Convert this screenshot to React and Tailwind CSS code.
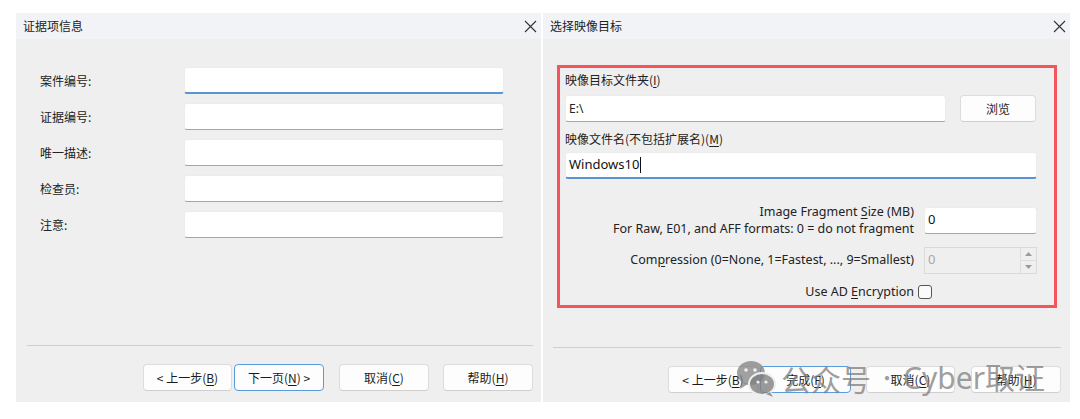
import React from 'react';

const cjk = "font-['Microsoft_YaHei','Noto_Sans_CJK_SC',sans-serif]";
const latin = "font-['Segoe_UI','Noto_Sans','Noto_Sans_CJK_SC',sans-serif]";

function CloseIcon() {
  return (
    <svg width="13" height="13" viewBox="0 0 13 13" className="text-[#333]">
      <path d="M1 1L12 12M12 1L1 12" stroke="currentColor" strokeWidth="1.1" />
    </svg>
  );
}

function TitleBar({ title }) {
  return (
    <div className={`flex h-[26px] items-center justify-between bg-[#f2f3f7] pl-[7px] pr-[4px] text-[12px] text-[#222] ${cjk}`}>
      <span>{title}</span>
      <CloseIcon />
    </div>
  );
}

function TextBox({ active, className = '', children }) {
  return (
    <div
      className={`flex h-[27px] items-center rounded-[3px] border border-[#ececec] bg-white px-[3px] ${
        active ? 'border-b-2 border-b-[#5694d6]' : 'border-b-[#a6a6a6]'
      } ${className}`}
    >
      {children}
    </div>
  );
}

function Button({ focused, children, className = '' }) {
  return (
    <button
      className={`flex h-[27px] items-center justify-center rounded-[4px] border bg-[#fdfdfd] text-[12px] text-[#1b1b1b] ${cjk} ${
        focused ? 'border-[#5a9be0]' : 'border-[#dcdcdc] border-b-[#cfcfcf]'
      } ${className}`}
    >
      {children}
    </button>
  );
}

const U = ({ children }) => <span className="underline underline-offset-2">{children}</span>;

const fields = ['案件编号:', '证据编号:', '唯一描述:', '检查员:', '注意:'];

function EvidenceDialog() {
  return (
    <div className="flex h-[389px] w-[525px] flex-col bg-[#efefef]">
      <TitleBar title="证据项信息" />
      <div className="flex flex-col gap-[9px] pl-[24px] pt-[28px]">
        {fields.map((label, i) => (
          <div key={label} className="flex items-center">
            <span className={`w-[144px] text-[12px] text-[#222] ${cjk}`}>{label}</span>
            <TextBox active={i === 0} className="w-[320px]" />
          </div>
        ))}
      </div>
      <div className="flex-1" />
      <div className="ml-[11px] mr-[8px] h-px bg-[#cfcfcf]" />
      <div className="mt-[18px] mb-[11px] flex justify-end pr-[8px]">
        <Button className="w-[89px]">&lt; 上一步(<U>B</U>)</Button>
        <Button focused className="ml-[2px] w-[90px]">下一页(<U>N</U>) &gt;</Button>
        <Button className="ml-[15px] w-[90px]">取消(<U>C</U>)</Button>
        <Button className="ml-[14px] w-[90px]">帮助(<U>H</U>)</Button>
      </div>
    </div>
  );
}

function Spinner() {
  return (
    <div className="flex h-[27px] w-[113px] items-stretch border border-[#dadada] bg-[#efefef]">
      <span className={`flex-1 px-[3px] pt-[2px] text-[13px] text-[#a8a8a8] ${latin}`}>0</span>
      <div className="flex w-[16px] flex-col border-l border-[#dedede]">
        <div className="flex flex-1 items-center justify-center border-b border-[#dedede]">
          <svg width="7" height="4" viewBox="0 0 7 4"><path d="M0 4L3.5 0L7 4Z" fill="#9a9a9a" /></svg>
        </div>
        <div className="flex flex-1 items-center justify-center">
          <svg width="7" height="4" viewBox="0 0 7 4"><path d="M0 0L3.5 4L7 0Z" fill="#9a9a9a" /></svg>
        </div>
      </div>
    </div>
  );
}

function ImageDialog() {
  return (
    <div className="relative flex h-[389px] w-[527px] flex-col bg-[#efefef]">
      <TitleBar title="选择映像目标" />
      <div className="ml-[14px] mr-[13px] mt-[26px] flex h-[243px] flex-col border-[3px] border-[#f5545a] pl-[5px] pr-[17px]">
        <div className={`mt-[3px] text-[12px] text-[#222] ${cjk}`}>映像目标文件夹(<U>I</U>)</div>
        <div className="mt-[6px] flex items-center">
          <TextBox className="w-[381px]">
            <span className={`text-[12px] text-[#222] ${latin}`}>E:\</span>
          </TextBox>
          <Button className="ml-[14px] w-[76px]">浏览</Button>
        </div>
        <div className={`mt-[8px] text-[12px] text-[#222] ${cjk}`}>映像文件名(不包括扩展名)(<U>M</U>)</div>
        <TextBox active className="mt-[4px] w-[472px]">
          <span className={`text-[13px] text-[#111] ${latin}`}>Windows10</span>
          <span className="ml-px h-[16px] w-px bg-[#111]" />
        </TextBox>
        <div className={`mt-[24px] grid grid-cols-[1fr_113px] items-center gap-x-[10px] text-[12.5px] text-[#222] ${latin}`}>
          <div className="text-right leading-[17px]">
            <div>Image Fragment <U>S</U>ize (MB)</div>
            <div>For Raw, E01, and AFF formats: 0 = do not fragment</div>
          </div>
          <TextBox className="w-[113px]">
            <span className="text-[13px] text-[#111]">0</span>
          </TextBox>
          <div className="mt-[10px] text-right">
            Com<U>p</U>ression (0=None, 1=Fastest, ..., 9=Smallest)
          </div>
          <div className="mt-[10px]">
            <Spinner />
          </div>
          <div className="mt-[9px] text-right">
            Use AD <U>E</U>ncryption
          </div>
          <div className="mt-[9px] flex">
            <span className="-ml-[6px] h-[14px] w-[14px] rounded-[3px] border border-[#555] bg-[#fafafa]" />
          </div>
        </div>
      </div>
      <div className="flex-1" />
      <div className="ml-[10px] mr-[9px] h-px bg-[#cfcfcf]" />
      <div className="mt-[18px] mb-[9px] flex justify-end pr-[9px]">
        <Button className="w-[90px]">&lt; 上一步(<U>B</U>)</Button>
        <Button focused className="ml-[2px] w-[91px]">完成(<U>F</U>)</Button>
        <Button className="ml-[15px] w-[89px]">取消(<U>C</U>)</Button>
        <Button className="ml-[16px] w-[90px]">帮助(<U>H</U>)</Button>
      </div>

      {/* watermark */}
      <div className={`pointer-events-none absolute left-[192px] top-[345px] flex items-center text-[30px] leading-none text-[#7f7f7f]/75 ${cjk}`}>
        <svg width="44" height="40" viewBox="0 0 44 40" className="mr-[2px]">
          <ellipse cx="16" cy="15" rx="14" ry="12" fill="#808080" fillOpacity="0.75" />
          <path d="M7 24 L5 31 L13 26Z" fill="#808080" fillOpacity="0.75" />
          <ellipse cx="27" cy="26" rx="13" ry="11" fill="#808080" fillOpacity="0.8" stroke="#efefef" strokeWidth="2" />
          <path d="M35 34 L38 39 L31 36Z" fill="#808080" fillOpacity="0.8" />
          <circle cx="11" cy="12" r="1.8" fill="#efefef" />
          <circle cx="20" cy="12" r="1.8" fill="#efefef" />
          <circle cx="23" cy="24" r="1.6" fill="#efefef" />
          <circle cx="31" cy="24" r="1.6" fill="#efefef" />
        </svg>
        <span>公众号</span>
        <span className="mx-[6px] text-[20px]">·</span>
        <span className="font-['Noto_Sans','Noto_Sans_CJK_SC',sans-serif]">Cyber取证</span>
      </div>
    </div>
  );
}

export default function App() {
  return (
    <div className="flex h-[419px] w-[1080px] gap-[2px] bg-white pl-[16px] pt-[13px]">
      <EvidenceDialog />
      <ImageDialog />
    </div>
  );
}
